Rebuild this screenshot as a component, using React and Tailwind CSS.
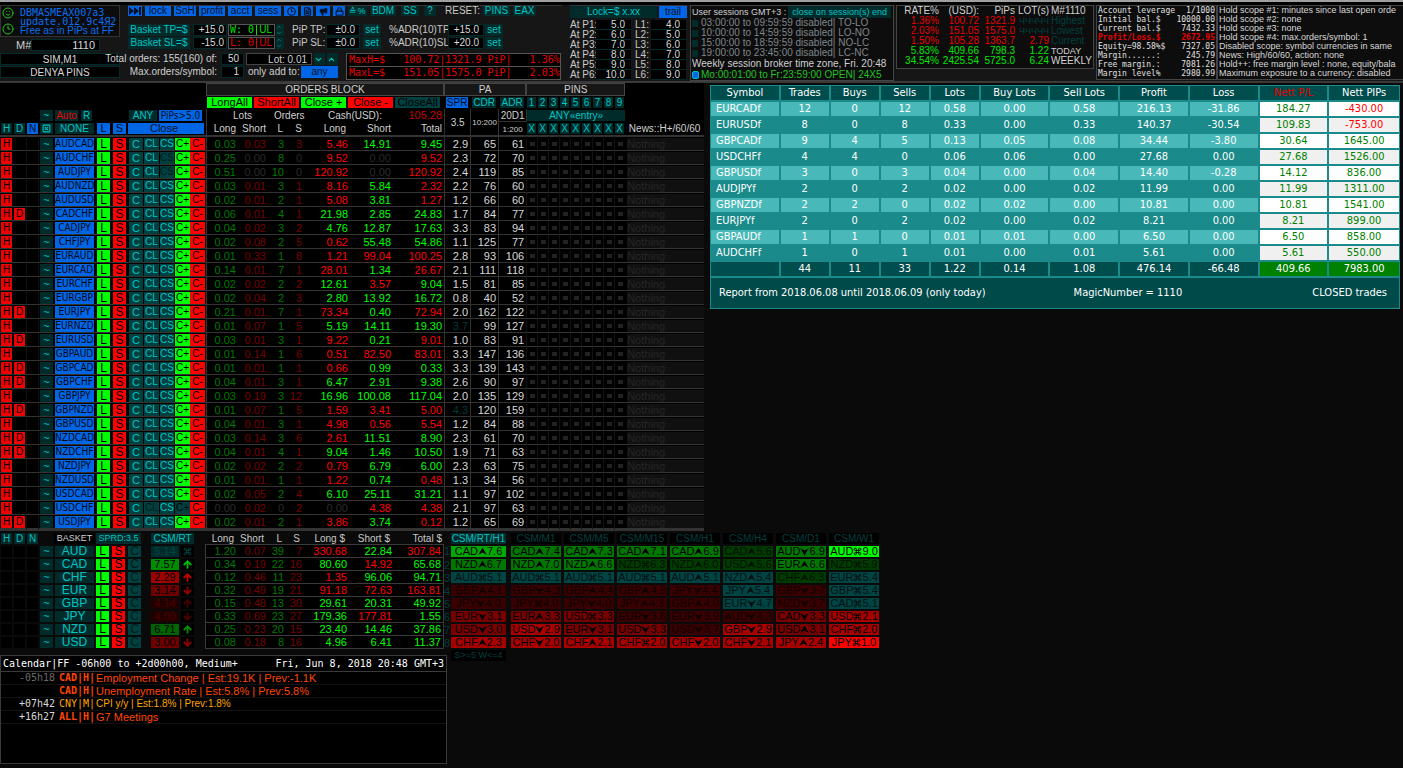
// App.jsx
import React from 'react';
import { Smile, Clock3, FileText, Megaphone, Lock, Command, ArrowUp, ArrowDown, ChevronDown, ChevronUp, SquareX } from 'lucide-react';

const mono = "font-['DejaVu_Sans_Mono','Liberation_Mono',monospace]";
const tahoma = "font-['DejaVu_Sans_Condensed','DejaVu_Sans',sans-serif]";
const tealBtn = "bg-[#002b2b] text-[#00c4c4] text-center whitespace-nowrap overflow-hidden";
const blueBtn = "bg-[#0066e6] text-[#001022] text-center whitespace-nowrap overflow-hidden";
const field = "bg-black text-[#d8d8d8] border border-[#002b2b] text-right";

// symbol, D flag, lots long/short, orders long/short, cash long/short/total, spread, cdr, adr
const PAIRS = [
    ['AUDCAD', 0, '0.03', '0.03', 3, 3, -5.46, 14.91, 9.45, '2.9', 65, 61],
    ['AUDCHF', 0, '0.25', '0.00', 8, 0, -9.52, 0, -9.52, '2.3', 72, 70],
    ['AUDJPY', 0, '0.51', '0.00', 10, 0, -120.92, 0, -120.92, '2.4', 119, 85],
    ['AUDNZD', 0, '0.03', '0.01', 3, 1, -8.16, 5.84, -2.32, '2.2', 76, 60],
    ['AUDUSD', 0, '0.02', '0.01', 2, 1, -5.08, 3.81, -1.27, '1.2', 66, 60],
    ['CADCHF', 1, '0.06', '0.01', 4, 1, 21.98, 2.85, 24.83, '1.7', 84, 77],
    ['CADJPY', 0, '0.04', '0.02', 3, 2, 4.76, 12.87, 17.63, '3.3', 83, 94],
    ['CHFJPY', 0, '0.02', '0.08', 2, 5, -0.62, 55.48, 54.86, '1.1', 125, 77],
    ['EURAUD', 0, '0.01', '0.33', 1, 8, -1.21, -99.04, -100.25, '2.8', 93, 106],
    ['EURCAD', 0, '0.14', '0.01', 7, 1, -28.01, 1.34, -26.67, '2.1', 111, 118],
    ['EURCHF', 0, '0.02', '0.02', 2, 2, 12.61, -3.57, 9.04, '1.5', 81, 85],
    ['EURGBP', 0, '0.02', '0.04', 2, 3, 2.8, 13.92, 16.72, '0.8', 40, 52],
    ['EURJPY', 1, '0.21', '0.01', 7, 1, -73.34, 0.4, -72.94, '2.0', 162, 122],
    ['EURNZD', 0, '0.01', '0.07', 1, 5, 5.19, 14.11, 19.3, '3.7', 99, 127],
    ['EURUSD', 1, '0.03', '0.01', 3, 1, -9.22, 0.21, -9.01, '1.0', 83, 91],
    ['GBPAUD', 0, '0.01', '0.14', 1, 6, -0.51, -82.5, -83.01, '3.3', 147, 136],
    ['GBPCAD', 1, '0.01', '0.01', 1, 1, -0.66, 0.99, 0.33, '3.3', 139, 143],
    ['GBPCHF', 1, '0.04', '0.01', 3, 1, 6.47, 2.91, 9.38, '2.6', 90, 97],
    ['GBPJPY', 0, '0.03', '0.19', 3, 12, 16.96, 100.08, 117.04, '2.0', 135, 129],
    ['GBPNZD', 1, '0.01', '0.07', 1, 5, -1.59, -3.41, -5, '4.3', 120, 159],
    ['GBPUSD', 0, '0.04', '0.01', 3, 1, -4.98, -0.56, -5.54, '1.2', 84, 88],
    ['NZDCAD', 1, '0.03', '0.14', 3, 6, -2.61, 11.51, 8.9, '2.3', 61, 70],
    ['NZDCHF', 1, '0.04', '0.01', 4, 1, 9.04, 1.46, 10.5, '1.9', 71, 63],
    ['NZDJPY', 0, '0.02', '0.02', 2, 2, -0.79, 6.79, 6, '2.3', 63, 75],
    ['NZDUSD', 0, '0.01', '0.01', 1, 1, -1.22, 0.74, -0.48, '1.3', 34, 56],
    ['USDCAD', 0, '0.02', '0.05', 2, 4, 6.1, 25.11, 31.21, '1.1', 97, 102],
    ['USDCHF', 0, '0.00', '0.02', 0, 2, 0, -4.38, -4.38, '2.1', 97, 63],
    ['USDJPY', 1, '0.02', '0.01', 2, 1, -3.86, 3.74, -0.12, '1.2', 65, 69],
];

const BASKETS = [
    ['AUD', '5.14', 'flat', 'bg-[#002b2b] text-[#004848]', 'text-[#004848]', '1.20', '0.07', 39, 7, -330.68, 22.84, -307.84],
    ['CAD', '7.57', 'up', 'bg-[#008c00] text-black', 'text-[#00c000]', '0.34', '0.19', 22, 16, 80.6, -14.92, 65.68],
    ['CHF', '2.29', 'up', 'bg-[#a00000] text-black', 'text-[#c00000]', '0.12', '0.46', 11, 23, -1.35, 96.06, 94.71],
    ['EUR', '3.14', 'down', 'bg-[#700000] text-black', 'text-[#900000]', '0.32', '0.49', 19, 21, -91.18, -72.63, -163.81],
    ['GBP', '4.14', 'up', 'bg-[#220000] text-[#4a0000]', 'text-[#480000]', '0.15', '0.48', 13, 30, 29.61, 20.31, 49.92],
    ['JPY', '4.00', 'down', 'bg-[#220000] text-[#4a0000]', 'text-[#480000]', '0.33', '0.69', 23, 27, 179.36, -177.81, 1.55],
    ['NZD', '6.71', 'up', 'bg-[#006400] text-black', 'text-[#009000]', '0.25', '0.23', 20, 15, 23.4, 14.46, 37.86],
    ['USD', '3.00', 'down', 'bg-[#700000] text-black', 'text-[#900000]', '0.08', '0.18', 8, 16, 4.96, 6.41, 11.37],
];

// u = rising, d = falling, f = flat
const METERS = [
    ['CSM/RT/H1', ['CADu7.6', 'NZDu6.7', 'AUDf5.1', 'GBPu4.1', 'JPYd4.0', 'EURd3.1', 'USDd3.0', 'CHFu2.3']],
    ['CSM/M1', ['CADu7.4', 'NZDu7.0', 'AUDf5.1', 'GBPd4.3', 'JPYf4.0', 'EURu3.3', 'USDd2.9', 'CHFd2.0']],
    ['CSM/M5', ['CADu7.3', 'NZDu6.6', 'AUDf5.1', 'GBPu4.4', 'JPYd4.0', 'USDf3.3', 'EURd3.1', 'CHFu2.1']],
    ['CSM/M15', ['CADu7.1', 'NZDf6.3', 'AUDf5.1', 'GBPu4.3', 'JPYu4.3', 'EURd3.6', 'USDd3.3', 'CHFf2.0']],
    ['CSM/H1', ['CADu6.9', 'NZDu6.0', 'AUDu5.1', 'JPYd4.4', 'GBPu4.0', 'EURd3.9', 'USDd3.7', 'CHFd2.0']],
    ['CSM/H4', ['CADu5.6', 'USDu5.6', 'NZDu5.4', 'JPYu5.4', 'EURd4.7', 'AUDd4.3', 'GBPd2.9', 'CHFd2.1']],
    ['CSM/D1', ['AUDd6.9', 'EURu6.6', 'CHFu6.3', 'GBPd3.7', 'NZDd3.7', 'CADd3.3', 'USDu3.1', 'JPYu2.4']],
    ['CSM/W1', ['AUDf9.0', 'NZDf5.9', 'EURf5.4', 'GBPf5.4', 'CADf5.1', 'USDf2.1', 'CHFf2.0', 'JPYf1.0']],
];

const REPORT = [
    ['EURCADf', '12', '0', '12', '0.58', '0.00', '0.58', '216.13', '-31.86', '184.27', '-430.00'],
    ['EURUSDf', '8', '0', '8', '0.33', '0.00', '0.33', '140.37', '-30.54', '109.83', '-753.00'],
    ['GBPCADf', '9', '4', '5', '0.13', '0.05', '0.08', '34.44', '-3.80', '30.64', '1645.00'],
    ['USDCHFf', '4', '4', '0', '0.06', '0.06', '0.00', '27.68', '0.00', '27.68', '1526.00'],
    ['GBPUSDf', '3', '0', '3', '0.04', '0.00', '0.04', '14.40', '-0.28', '14.12', '836.00'],
    ['AUDJPYf', '2', '0', '2', '0.02', '0.00', '0.02', '11.99', '0.00', '11.99', '1311.00'],
    ['GBPNZDf', '2', '2', '0', '0.02', '0.02', '0.00', '10.81', '0.00', '10.81', '1541.00'],
    ['EURJPYf', '2', '0', '2', '0.02', '0.00', '0.02', '8.21', '0.00', '8.21', '899.00'],
    ['GBPAUDf', '1', '1', '0', '0.01', '0.01', '0.00', '6.50', '0.00', '6.50', '858.00'],
    ['AUDCHFf', '1', '0', '1', '0.01', '0.00', '0.01', '5.61', '0.00', '5.61', '550.00'],
];

const cashColor = v => (v === 0 ? 'text-[#2a2a2a]' : v > 0 ? 'text-[#00ff00]' : 'text-[#ff0000]');
const longColor = v => (Number(v) === 0 ? 'text-[#2a2a2a]' : 'text-[#007800]');
const shortColor = v => (Number(v) === 0 ? 'text-[#2a2a2a]' : 'text-[#780000]');
const cash = v => Math.abs(v).toFixed(2);

const meterColor = v => {
    if (v >= 8.5) return 'bg-[#00ff00] text-black';
    if (v >= 7.5) return 'bg-[#00a800] text-black';
    if (v >= 6.5) return 'bg-[#007800] text-black';
    if (v >= 5.5) return 'bg-[#003c00] text-[#001000]';
    if (v >= 4.5) return 'bg-[#004444] text-[#001010]';
    if (v >= 3.5) return 'bg-[#380000] text-[#100000]';
    if (v >= 2.95) return 'bg-[#780000] text-black';
    if (v >= 1.5) return 'bg-[#a80000] text-black';
    return 'bg-[#ff0000] text-black';
};

const Trend = ({ dir }) => {
    if (dir === 'f') return <Command size={9} strokeWidth={2.5} />;
    return (
        <svg width="9" height="9" viewBox="0 0 9 9" fill="currentColor">
            {dir === 'u' ? <path d="M4.5 0.5 8.8 8 4.5 5.6 0.2 8Z" /> : <path d="M4.5 8.5 8.8 1 4.5 3.4 0.2 1Z" />}
        </svg>
    );
};

const IdentPanel = () => (
    <div className="w-[120px] shrink-0">
        <div className="flex h-8 gap-1.5 border border-[#333] bg-[#0c0c0c] pl-px">
            <div className="flex flex-col justify-between py-px text-[#22c322]">
                <Smile size={12} />
                <Clock3 size={12} />
            </div>
            <div className="text-[10px] leading-[9px] text-[#0a6cf0] pt-0.5 whitespace-nowrap">
                <div className={mono}>DBMASMEAX007a3</div>
                <div className={mono}>update.012.9c4Я2</div>
                <div>Free as in PiPs at FF</div>
            </div>
        </div>
        <label className="flex h-3 mt-0.5 pl-4 pr-5 text-[#d0d0d0] items-center">
            M#
            <input defaultValue="1110" className={`${field} h-3 w-full min-w-0 px-1`} />
        </label>
        <div className="mt-0.5 h-3 bg-black border border-[#002b2b] text-center text-[10px] leading-[11px] text-[#d8d8d8]">SIM,M1</div>
        <div className="mt-px h-3 bg-black border border-[#002b2b] text-center text-[10px] leading-[11px] text-[#d8d8d8]">DENYA PINS</div>
    </div>
);

const BasketLine = ({ kind, basket, lots, boxClass, adr }) => (
    <div className="flex h-3 items-stretch leading-3 text-[#c8c8c8] whitespace-nowrap">
        <button className={`${tealBtn} w-[62px] mr-[3px]`}>Basket {kind}=$</button>
        <input aria-label={`Basket ${kind}`} defaultValue={basket} className={`${field} w-[34px] mr-px pr-0.5`} />
        <div className={`flex w-[47px] justify-between border border-[#555] bg-black px-px leading-[10px] ${boxClass}`}>
            <span className={`${mono} whitespace-pre`}>{lots}</span>
            <span className="border-l border-current pl-0.5 pr-px">UL</span>
        </div>
        <span className="flex flex-col w-2 ml-px mr-2 bg-[#002b2b] text-[#00c4c4]">
            <ChevronUp size={6} /><ChevronDown size={6} />
        </span>
        <span className="w-[34px]">PiP {kind}:</span>
        <input aria-label={`PiP ${kind}`} defaultValue="±0.0" className={`${field} w-[34px] mr-[3px] pr-1`} />
        <button className={`${tealBtn} w-[18px] mr-2`}>set</button>
        <span className="w-[59px] text-right pr-px">%ADR(10){kind}:</span>
        <input aria-label={`ADR ${kind}`} defaultValue={adr} className={`${field} w-9 mr-px pr-1`} />
        <button className={`${tealBtn} w-[18px]`}>set</button>
    </div>
);

const ControlPanel = () => (
    <div className="w-[442px] shrink-0 pl-2 text-[10px]">
        <div className="flex h-[11px] gap-[3px] leading-[10px] border-t border-[#333] whitespace-nowrap">
            <button aria-label="Skip" className={`${blueBtn} w-3.5 flex items-center justify-center`}>
                <svg width="12" height="8" viewBox="0 0 12 8" fill="currentColor"><path d="M0 0 5 4 0 8ZM5 0 10 4 5 8ZM10 0H12V8H10Z" /></svg>
            </button>
            <button className={`${blueBtn} w-[26px]`}>lock</button>
            <button className={`${blueBtn} w-[22px]`}>SoH</button>
            <button className={`${blueBtn} w-[26px]`}>profit</button>
            <button className={`${blueBtn} w-[24px]`}>acct</button>
            <button className={`${blueBtn} w-[26px]`}>sess</button>
            <button aria-label="Clock" className={`${blueBtn} w-3.5 flex items-center justify-center`}><Clock3 size={9} strokeWidth={3} /></button>
            <button aria-label="Log" className={`${blueBtn} w-3 flex items-center justify-center`}><FileText size={9} strokeWidth={3} /></button>
            <button aria-label="Announce" className={`${blueBtn} w-3.5 flex items-center justify-center`}><Megaphone size={9} fill="currentColor" /></button>
            <button aria-label="Lock" className={`${blueBtn} w-3 flex items-center justify-center`}><Lock size={9} strokeWidth={3} /></button>
            <button className={`${tealBtn} w-[19px] text-[9px]`}>≙%</button>
            <button className={`${tealBtn} w-[26px]`}>BDM</button>
            <button className={`${tealBtn} w-[18px] ml-0.5`}>SS</button>
            <button className={`${tealBtn} w-3 ml-0.5`}>?</button>
            <span className="ml-[5px] text-[#c8c8c8] text-right w-9">RESET:</span>
            <button className={`${tealBtn} w-[27px]`}>PINS</button>
            <button className={`${tealBtn} w-[23px]`}>EAX</button>
        </div>
        <div className="mt-2 flex flex-col gap-px">
            <BasketLine kind="TP" basket="+15.0" lots="W: 0" boxClass="text-[#00e000]" adr="+15.0" />
            <BasketLine kind="SL" basket="-15.0" lots="L: 0" boxClass="text-[#e00000]" adr="+20.0" />
        </div>
        <div className="mt-1 flex leading-3 text-[#d0d0d0] whitespace-nowrap">
            <div className="flex w-[89px] flex-col items-end gap-px">
                <label htmlFor="total-orders">Total orders: 155(160) of:</label>
                <label htmlFor="max-orders">Max.orders/symbol:</label>
            </div>
            <div className="ml-1 mr-0.5 flex w-[23px] flex-col gap-px">
                <input id="total-orders" defaultValue="50" className={`${field} h-3 w-full pr-1`} />
                <input id="max-orders" defaultValue="1" className={`${field} h-3 w-full pr-1`} />
            </div>
            <div className="mr-2 flex w-[92px] flex-col gap-px">
                <div className="flex h-3 gap-0.5">
                    <span className="flex-1 border border-[#444] bg-black pr-1 text-right leading-[11px]">Lot: 0.01</span>
                    <button aria-label="Lot down" className={`${tealBtn} w-[11px]`}><ChevronDown size={9} strokeWidth={3} /></button>
                    <button aria-label="Lot up" className={`${tealBtn} w-[11px]`}><ChevronUp size={9} strokeWidth={3} /></button>
                </div>
                <div className="flex h-3 justify-between pl-0.5">
                    <span>only add to:</span>
                    <button className={`${blueBtn} w-[37px]`}>any</button>
                </div>
            </div>
            <div className={`${mono} w-[215px] border border-[#555] bg-black pl-0.5 text-[10px] leading-3 text-[#e60000] whitespace-pre`}>
                <div className="border-b border-[#555]">MaxH=$   100.72|1321.9 PiP|   1.36%</div>
                <div>MaxL=$   151.05|1575.0 PiP|   2.03%</div>
            </div>
        </div>
    </div>
);

const LOCKS = [['5.0', '4.0'], ['6.0', '5.0'], ['7.0', '6.0'], ['8.0', '7.0'], ['9.0', '8.0'], ['10.0', '9.0']];

const LockPanel = () => (
    <div className="w-[117px] shrink-0 mr-[3px] text-[10px] text-[#c8c8c8]">
        <div className="flex h-[13px] gap-0.5 border-t border-[#333] leading-3">
            <button className={`${tealBtn} flex-1`}>Lock=$ x.xx</button>
            <button className={`${blueBtn} w-7`}>trail</button>
        </div>
        <div className="mt-0.5">
            {LOCKS.map(([p, l], i) => (
                <div key={i} className="flex h-2.5 items-center leading-[10px] whitespace-nowrap">
                    <label htmlFor={`p${i}`} className="w-[26px]">At P{i + 1}:</label>
                    <input id={`p${i}`} defaultValue={p} className={`${field} h-2.5 w-[35px] border-x-0 border-t-0 pr-1.5`} />
                    <label htmlFor={`l${i}`} className="ml-1 w-4">L{i + 1}:</label>
                    <input id={`l${i}`} defaultValue={l} className={`${field} h-2.5 w-[35px] border-x-0 border-t-0 pr-1.5`} />
                </div>
            ))}
        </div>
    </div>
);

const SESSIONS = [
    '03:00:00 to 09:59:59 disabled| TO-LO',
    '10:00:00 to 14:59:59 disabled| LO-NO',
    '15:00:00 to 18:59:59 disabled| NO-LC',
    '19:00:00 to 23:45:00 disabled| LC-NC',
];

const SessionPanel = () => (
    <div className="w-[204px] h-[76px] shrink-0 mr-0.5 border border-[#444] bg-[#0d0d0d] pl-px text-[10px] text-[#d0d0d0] whitespace-nowrap">
        <div className="flex h-3 leading-3 text-[9px] justify-between pr-0.5">
            User sessions GMT+3 :
            <button className={`${tealBtn} ml-0.5 flex-1 leading-[11px]`}>close on session(s) end</button>
        </div>
        {SESSIONS.map(s => (
            <label key={s} className="flex h-2.5 items-center gap-[3px] leading-[10px] text-[#7f868c]">
                <input type="checkbox" className="appearance-none w-1.5 h-[7px] bg-[#002b2b]" />
                {s}
            </label>
        ))}
        <div className="h-[11px] leading-[11px]">Weekly session broker time zone, Fri. 20:48</div>
        <label className="flex h-[11px] items-center gap-0.5 leading-[11px] text-[#22c322]">
            <input type="checkbox" defaultChecked className="appearance-none w-[7px] h-2 rounded-xs border border-[#00c4c4] bg-[#0066e6]" />
            Mo:00:01:00 to Fr:23:59:00 OPEN| 24X5
        </label>
    </div>
);

const RATES = [
    ['1.36%', '100.72', '1321.9', 'ЧЧЧЧЧ', 'Highest', 'text-[#e60000]', 'text-[#004040]'],
    ['2.03%', '151.05', '1575.0', 'ЧЧЧЧЧ', 'Lowest', 'text-[#e60000]', 'text-[#004040]'],
    ['1.50%', '105.28', '1363.7', '2.79', 'Current', 'text-[#e60000]', 'text-[#004040]'],
    ['5.83%', '409.66', '798.3', '1.22', 'TODAY', 'text-[#00e600]', 'text-[#d0d0d0]'],
    ['34.54%', '2425.54', '5725.0', '6.24', 'WEEKLY', 'text-[#00e600]', 'text-[#d0d0d0]'],
];

const RatePanel = () => (
    <div className="w-[198px] h-16 shrink-0 mr-0.5 border border-[#444] bg-[#0d0d0d]">
        <table className="w-full table-fixed border-separate border-spacing-0 text-right text-[10px] leading-[10px] whitespace-nowrap">
            <colgroup><col className="w-[42px]" /><col className="w-10" /><col className="w-9" /><col className="w-[34px]" /><col /></colgroup>
            <thead className="text-[#d0d0d0]">
                <tr>{['RATE%', '(USD):', 'PiPs', 'LOT(s)'].map(h => <th key={h} className="p-0 font-normal">{h}</th>)}<th className="p-0 pl-0.5 text-left font-normal">M#1110</th></tr>
            </thead>
            <tbody>
                {RATES.map(([r, u, p, l, name, color, nameColor]) => (
                    <tr key={name} className={color}>
                        <td className="p-0">{r}</td><td className="p-0">{u}</td><td className="p-0">{p}</td>
                        <td className={`p-0 ${l.startsWith('Ч') ? 'text-[9px] text-[#004040]' : ''}`}>{l}</td>
                        <td className={`p-0 pl-0.5 text-left ${nameColor} ${name === 'TODAY' ? 'text-[9px]' : ''}`}>{name}</td>
                    </tr>
                ))}
            </tbody>
        </table>
    </div>
);

const ACCOUNT = [
    ['Account leverage', '1/1000'], ['Initial bal.$', '10000.00'], ['Current bal.$', '7432.33'], ['Profit/Loss.$', '2672.95'],
    ['Equity=98.58%$', '7327.05'], ['Margin......:', '245.79'], ['Free margin.:', '7081.26'], ['Margin level%', '2980.99'],
];

const SCOPES = [
    'Hold scope #1: minutes since last open orde', 'Hold scope #2: none', 'Hold scope #3: none', 'Hold scope #4: max.orders/symbol: 1',
    'Disabled scope: symbol currencies in same', 'News: High/60/60, action: none',
    'Hold++: free margin level : none, equity/bala', 'Maximum exposure to a currency: disabled',
];

const Header = () => (
    <header className="flex h-[78px] border-b-2 border-[#3a3a3a] bg-[#161616] overflow-hidden">
        <IdentPanel />
        <ControlPanel />
        <div className="w-2 shrink-0" />
        <LockPanel />
        <SessionPanel />
        <RatePanel />
        <dl className={`${mono} w-[121px] h-[75px] shrink-0 border border-[#444] bg-[#0d0d0d] px-px text-[8px] leading-[9px] text-[#e0e0e0] whitespace-nowrap`}>
            {ACCOUNT.map(([k, v]) => (
                <div key={k} className={`flex justify-between ${k.startsWith('Profit') ? 'font-bold text-[#e60000]' : ''}`}>
                    <dt>{k}</dt><dd>{v}</dd>
                </div>
            ))}
        </dl>
        <div className="h-[75px] min-w-0 flex-1 overflow-hidden border border-r-0 border-[#444] bg-[#0d0d0d] pl-px text-[9px] leading-[9px] text-[#d8d8d8] whitespace-nowrap">
            {SCOPES.map(s => <p key={s}>{s}</p>)}
        </div>
    </header>
);

const th = "p-0 font-normal text-center text-[10px] text-[#d0d0d0]";
const vline = "border-l border-[#333]";
const headBtn = "block h-[11px] w-full leading-[11px]";
const blockBtn = "h-[11px] flex-1 text-[11px] leading-[11px]";
const PINS = [1, 2, 3, 4, 5, 6, 7, 8, 9];

const PairsHead = () => (
    <thead>
        <tr className="h-[13px]">
            <th colSpan={12} className={th}></th>
            <th colSpan={7} className={`${th} border border-[#444] bg-[#161616]`}>ORDERS BLOCK</th>
            <th colSpan={3} className={`${th} border border-[#444] bg-[#161616]`}>PA</th>
            <th colSpan={9} className={`${th} border border-[#444] bg-[#161616]`}>PINS</th>
            <th className={th}></th>
        </tr>
        <tr className="h-[13px]">
            <th colSpan={12} className={th}></th>
            <th colSpan={7} className={`${th} pr-1`}>
                <div className="flex gap-0.5 whitespace-nowrap pl-px text-black">
                    <button className={`${blockBtn} bg-[#00ff00]`}>LongAll</button>
                    <button className={`${blockBtn} bg-[#ff0000]`}>ShortAll</button>
                    <button className={`${blockBtn} bg-[#00ff00]`}>Close +</button>
                    <button className={`${blockBtn} bg-[#ff0000]`}>Close -</button>
                    <button className={`${blockBtn} bg-[#004040]`}>CloseAll</button>
                </div>
            </th>
            <th className={`${th} px-0.5`}><button className={`${blueBtn} ${headBtn}`}>SPR</button></th>
            <th className={`${th} px-0.5`}><button className={`${tealBtn} ${headBtn}`}>CDR</button></th>
            <th className={`${th} px-0.5`}><button className={`${tealBtn} ${headBtn}`}>ADR</button></th>
            {PINS.map(n => (
                <th key={n} className={`${th} px-px`}><button className={`${tealBtn} ${headBtn}`}>{n}</button></th>
            ))}
            <th className={th}></th>
        </tr>
        <tr className="h-[13px]">
            <th colSpan={3} className={th}></th>
            <th className={`${th} px-px`}><button className={`${tealBtn} ${headBtn}`}>~</button></th>
            <th className={`${th} pl-px`}>
                <div className="flex gap-[3px] pr-1">
                    <button className="h-[11px] flex-1 leading-[11px] bg-[#002b2b] text-[#e60000]">Auto</button>
                    <button className={`${tealBtn} h-[11px] w-[11px] leading-[11px]`}>R</button>
                </div>
            </th>
            <th colSpan={2} className={th}></th>
            <th colSpan={5} className={`${th} pl-px`}>
                <div className="flex gap-0.5 pr-1">
                    <button className={`${tealBtn} h-[11px] w-7 leading-[11px]`}>ANY</button>
                    <button className={`${blueBtn} ${tahoma} h-[11px] flex-1 leading-[11px]`}>PiPs&gt;5.0</button>
                </div>
            </th>
            <th colSpan={2} className={`${th} ${vline} pl-3`}>Lots</th>
            <th colSpan={2} className={`${th} pl-2`}>Orders</th>
            <th colSpan={2} className={`${th} pl-4`}>Cash(USD):</th>
            <th className={`${th} text-right pr-0.5`}><span className="text-[11px] text-[#c80000]">105.28</span></th>
            <th rowSpan={2} className={`${th} ${vline}`}>3.5</th>
            <th rowSpan={2} className={`${th} ${vline}`}><span className="text-[8px]">10:200</span></th>
            <th className={`${th} ${vline} border-b`}>20D1</th>
            <th colSpan={9} className={`${th} ${vline} pb-px`}><button className={`${tealBtn} ${headBtn}`}>ANY«entry»</button></th>
            <th className={th}></th>
        </tr>
        <tr className="h-[13px]">
            {['H', 'D'].map(h => <th key={h} className={`${th} px-px`}><button className={`${tealBtn} ${headBtn}`}>{h}</button></th>)}
            <th className={`${th} px-px`}><button className={`${blueBtn} ${headBtn}`}>N</button></th>
            <th className={`${th} px-px`}><button aria-label="Clear" className={`${tealBtn} flex h-[11px] w-full items-center justify-center`}><SquareX size={9} strokeWidth={3} /></button></th>
            <th className={`${th} pl-px pr-0.5`}><button className={`${tealBtn} ${headBtn}`}>NONE</button></th>
            {['L', 'S'].map(h => <th key={h} className={`${th} pl-px pr-0.5`}><button className={`${blueBtn} ${headBtn} text-[11px]`}>{h}</button></th>)}
            <th colSpan={5} className={`${th} pr-0.5`}><button className={`${blueBtn} ${headBtn} pr-1 text-[11px]`}>Close</button></th>
            <th className={`${th} ${vline} text-right`}>Long</th>
            <th className={`${th} text-right`}>Short</th>
            <th className={`${th} text-right pr-0.5`}>L</th>
            <th className={`${th} text-right pr-px`}>S</th>
            <th className={`${th} text-right pr-0.5`}>Long</th>
            <th className={`${th} text-right`}>Short</th>
            <th className={`${th} text-right pr-0.5`}>Total</th>
            <th className={`${th} ${vline}`}><span className="text-[8px]">1:200</span></th>
            {PINS.map(n => (
                <th key={n} className={`${th} px-px`}><button className={`${tealBtn} ${headBtn}`}>X</button></th>
            ))}
            <th className={`${th} whitespace-nowrap`}>News::H+/60/60</th>
        </tr>
    </thead>
);

const cell = "p-0 pt-px border-b border-[#333]";
const box = "block h-3 w-full leading-3 text-center overflow-hidden whitespace-nowrap";

const PairRow = ({ row }) => {
    const [symbol, d, lotsL, lotsS, ordL, ordS, cashL, cashS, total, spread, cdr, adr] = row;
    const plus = symbol !== 'USDCHF';
    return (
        <tr>
            <td className={`${cell} px-px`}><button className={`${box} bg-[#f00000] text-black text-[10px]`}>H</button></td>
            <td className={`${cell} px-px`}>{d ? <button className={`${box} bg-[#f00000] text-black text-[10px]`}>D</button> : null}</td>
            <td className={`${cell} border-x border-x-[#111]`}></td>
            <td className={`${cell} px-px`}><button className={`${box} ${tealBtn}`}>~</button></td>
            <td className={`${cell} pl-px pr-0.5`}><button className={`${box} ${tahoma} bg-[#0066e6] text-[#000814] text-[10px]`}>{symbol}</button></td>
            <td className={`${cell} pl-px pr-0.5`}><button className={`${box} bg-[#00ff00] text-black text-xs leading-3`}>L</button></td>
            <td className={`${cell} pl-px pr-0.5`}><button className={`${box} bg-[#ff0000] text-black text-xs leading-3`}>S</button></td>
            <td className={`${cell} px-px`}><button className={`${box} bg-[#004040] text-[#00c4c4]`}>C</button></td>
            <td className={`${cell} pr-px`}><button className={`${box} bg-[#004040] text-[10px] ${ordL ? 'text-[#00c4c4]' : 'text-[#001a1a]'}`}>CL</button></td>
            <td className={`${cell} pr-px`}><button className={`${box} bg-[#004040] text-[10px] ${ordS ? 'text-[#00c4c4]' : 'text-[#001a1a]'}`}>CS</button></td>
            <td className={cell}><button className={`${box} ${plus ? 'bg-[#00ff00]' : 'bg-[#004040]'} text-[10px] text-black`}>C+</button></td>
            <td className={`${cell} pr-px`}><button className={`${box} bg-[#ff0000] text-[10px] text-black`}>C-</button></td>
            <td className={`${cell} ${vline} ${longColor(lotsL)}`}>{lotsL}</td>
            <td className={`${cell} ${shortColor(lotsS)}`}>{lotsS}</td>
            <td className={`${cell} pr-px ${longColor(ordL)}`}>{ordL}</td>
            <td className={`${cell} pr-px ${shortColor(ordS)}`}>{ordS}</td>
            <td className={`${cell} ${cashColor(cashL)}`}>{cash(cashL)}</td>
            <td className={`${cell} ${cashColor(cashS)}`}>{cash(cashS)}</td>
            <td className={`${cell} pr-0.5 ${cashColor(total)}`}>{cash(total)}</td>
            <td className={`${cell} ${vline} pr-0.5 ${Number(spread) > 3.5 ? 'text-[#003c3c]' : 'text-[#d8d8d8]'}`}>{spread}</td>
            <td className={`${cell} ${vline} pr-0.5 text-[#d8d8d8]`}>{cdr}</td>
            <td className={`${cell} ${vline} pr-0.5 text-[#d8d8d8]`}>{adr}</td>
            {PINS.map(n => (
                <td key={n} className={`${cell} border-l border-l-[#121212]`}><span className="mx-auto block h-1 w-[5px] bg-[#222]" /></td>
            ))}
            <td className={`${cell} pl-0.5`}><span className="block h-3 bg-[#101010] text-left leading-3 text-[#262626]">Nothing</span></td>
        </tr>
    );
};

const PairsTable = () => (
    <table className="w-[704px] shrink-0 table-fixed border-separate border-spacing-0 bg-black text-right text-[11px] leading-[11px]">
        <colgroup>
            <col className="w-[13px]" /><col className="w-[13px]" /><col className="w-[13px]" /><col className="w-[15px]" /><col className="w-[42px]" />
            <col className="w-4" /><col className="w-4" /><col className="w-4" /><col className="w-4" /><col className="w-[15px]" /><col className="w-[15px]" /><col className="w-4" />
            <col className="w-[30px]" /><col className="w-[30px]" /><col className="w-[19px]" /><col className="w-[18px]" />
            <col className="w-[45px]" /><col className="w-[43px]" /><col className="w-[53px]" />
            <col className="w-[26px]" /><col className="w-7" /><col className="w-7" />
            {PINS.map(n => <col key={n} className="w-[11px]" />)}
            <col />
        </colgroup>
        <PairsHead />
        <tbody className="[&>tr:first-child>td]:border-t-2 [&>tr:first-child>td]:border-t-[#333] [&>tr:last-child>td]:border-b-3">
            {PAIRS.map(row => <PairRow key={row[0]} row={row} />)}
        </tbody>
    </table>
);

const REPORT_HEAD = ['Symbol', 'Trades', 'Buys', 'Sells', 'Lots', 'Buy Lots', 'Sell Lots', 'Profit', 'Loss', 'Nett P/L', 'Nett PIPs'];
const REPORT_TOTAL = ['', '44', '11', '33', '1.22', '0.14', '1.08', '476.14', '-66.48', '409.66', '7983.00'];

const Report = () => (
    <section className={`${tahoma} mt-0.5 ml-1.5 mr-[3px] min-w-0 flex-1 self-start border border-[#1a8a8a] bg-[#1a8a8a] text-[11px] leading-[14px] text-white`}>
        <table className="w-full table-fixed border-separate border-spacing-0 text-center">
            <colgroup>
                {REPORT_HEAD.map((h, i) => <col key={h} className={i > 0 && i < 5 ? 'w-[50px]' : ''} />)}
            </colgroup>
            <thead>
                <tr>
                    {REPORT_HEAD.map(h => (
                        <th key={h} className={`h-4 border-r-2 border-b-2 border-[#1a8a8a] bg-[#004d4d] p-0 font-normal last:border-r-0 ${h === 'Nett P/L' ? 'text-[#e60000]' : ''}`}>{h}</th>
                    ))}
                </tr>
            </thead>
            <tbody>
                {REPORT.map((row, r) => (
                    <tr key={row[0]} className={r % 2 ? 'bg-[#1a8a8a]' : 'bg-[#48b8b8]'}>
                        {row.map((v, i) => (
                            <td
                                key={i}
                                className={`h-4 border-r-2 border-b-2 border-[#1a8a8a] p-0 last:border-r-0 ${i === 0 ? 'pl-[5px] text-left' : ''} ${i > 8 ? (r % 2 ? 'bg-[#f0f0f0]' : 'bg-white') : ''} ${i > 8 ? (v.startsWith('-') ? 'text-[#ff0000]' : 'text-[#008000]') : ''}`}
                            >
                                {v}
                            </td>
                        ))}
                    </tr>
                ))}
                <tr>
                    {REPORT_TOTAL.map((v, i) => (
                        <td key={i} className={`h-4 border-r-2 border-b-2 border-[#1a8a8a] p-0 last:border-r-0 ${i > 8 ? 'bg-[#008000]' : 'bg-[#004d4d]'}`}>{v}</td>
                    ))}
                </tr>
            </tbody>
        </table>
        <footer className="flex h-[30px] items-center bg-[#004a4a] pl-2 pr-3">
            <span>Report from 2018.06.08 until 2018.06.09 (only today)</span>
            <span className="ml-[88px] mr-auto">MagicNumber = 1110</span>
            <span>CLOSED trades</span>
        </footer>
    </section>
);

const bcell = "p-0 pt-0.5";
const bbox = "block h-[11px] w-full leading-[11px] text-center overflow-hidden whitespace-nowrap";

const BasketControls = () => (
    <table className="w-[194px] table-fixed border-separate border-spacing-0 leading-[11px]">
        <colgroup>
            <col className="w-[13px]" /><col className="w-[13px]" /><col className="w-[13px]" /><col className="w-[15px]" /><col className="w-[41px]" />
            <col className="w-4" /><col className="w-4" /><col className="w-6" /><col className="w-[29px]" /><col />
        </colgroup>
        <thead>
            <tr>
                {['H', 'D', 'N'].map(h => <th key={h} className={`${bcell} px-px font-normal`}><button className={`${tealBtn} ${bbox} text-[10px]`}>{h}</button></th>)}
                <th className={bcell}></th>
                <th className={`${bcell} font-normal`}><span className={`${bbox} bg-black text-[9px] text-[#d0d0d0]`}>BASKET</span></th>
                <th colSpan={3} className={`${bcell} pl-px pr-2.5 font-normal`}><button className={`${tealBtn} ${bbox} text-[9px]`}>SPRD:3.5</button></th>
                <th colSpan={2} className={`${bcell} font-normal`}><button className={`${tealBtn} ${bbox} text-[10px]`}>CSM/RT</button></th>
            </tr>
        </thead>
        <tbody>
            {BASKETS.map(([name, score, dir, scoreColor, arrowColor]) => (
                <tr key={name} className="h-[13px]">
                    {[1, 2, 3].map(n => <td key={n} className={`${bcell} px-px`}><span className={`${bbox} bg-black`}></span></td>)}
                    <td className={`${bcell} px-px`}><button className={`${tealBtn} ${bbox}`}>~</button></td>
                    <td className={`${bcell} px-px`}><button className={`${tealBtn} ${bbox} text-xs leading-[11px]`}>{name}</button></td>
                    <td className={`${bcell} pl-px pr-0.5`}><button className={`${bbox} bg-[#00ff00] text-black text-xs leading-[11px]`}>L</button></td>
                    <td className={`${bcell} pl-px pr-0.5`}><button className={`${bbox} bg-[#ff0000] text-black text-xs leading-[11px]`}>S</button></td>
                    <td className={`${bcell} pl-px pr-2.5`}><button className={`${bbox} bg-[#004040] text-[#001a1a] text-xs leading-[11px]`}>C</button></td>
                    <td className={`${bcell} pr-px`}><span className={`${bbox} text-[11px] ${scoreColor}`}>{score}</span></td>
                    <td className={`${bcell} pl-px`}>
                        <span className={`flex h-[11px] items-center justify-center bg-black ${arrowColor}`}>
                            {dir === 'flat' ? <Command size={9} strokeWidth={2.5} /> : dir === 'up' ? <ArrowUp size={11} strokeWidth={4} /> : <ArrowDown size={11} strokeWidth={4} />}
                        </span>
                    </td>
                </tr>
            ))}
        </tbody>
    </table>
);

const BasketOrders = () => (
    <table className="ml-[11px] w-[245px] table-fixed border-separate border-spacing-0 text-right leading-[11px]">
        <colgroup>
            <col className="w-[31px]" /><col className="w-[30px]" /><col className="w-[18px]" /><col className="w-[18px]" />
            <col className="w-[45px]" /><col className="w-[45px]" /><col className="w-[52px]" /><col />
        </colgroup>
        <thead className="text-[10px] text-[#c8c8c8]">
            <tr>
                {['Long', 'Short', 'L', 'S', 'Long $', 'Short $', 'Total $'].map(h => <th key={h} className="h-[13px] p-0 pt-0.5 pr-0.5 font-normal">{h}</th>)}
                <th className="p-0"></th>
            </tr>
        </thead>
        <tbody className="[&>tr:first-child>td:not(:last-child)]:border-t">
            {BASKETS.map(([name, , , , , lotsL, lotsS, ordL, ordS, cashL, cashS, total], i) => (
                <tr key={name} className="h-[13px] [&>td:not(:last-child)]:border-b [&>td]:border-[#3a3a3a] [&>td:not(:last-child)]:bg-black">
                    <td className={`p-0 pt-px border-l ${longColor(lotsL)}`}>{lotsL}</td>
                    <td className={`p-0 pt-px ${shortColor(lotsS)}`}>{lotsS}</td>
                    <td className={`p-0 pt-px ${longColor(ordL)}`}>{ordL}</td>
                    <td className={`p-0 pt-px ${shortColor(ordS)}`}>{ordS}</td>
                    <td className={`p-0 pt-px ${cashColor(cashL)}`}>{cash(cashL)}</td>
                    <td className={`p-0 pt-px ${cashColor(cashS)}`}>{cash(cashS)}</td>
                    <td className={`p-0 pt-px pr-0.5 border-r ${cashColor(total)}`}>{cash(total)}</td>
                    <td className="p-0 pt-px text-[#003c3c]">{i + 1}</td>
                </tr>
            ))}
        </tbody>
    </table>
);

const Meters = () => (
    <div className="flex gap-[3px] pl-px pt-0.5 text-center text-[11px] leading-[11px] whitespace-nowrap">
        {METERS.map(([title, rows], m) => (
            <div key={title} className={`flex flex-col gap-0.5 ${m === 0 ? 'w-[55px] mr-0.5' : 'w-[50px]'}`}>
                <button className={`h-[11px] text-[10px] ${m === 0 ? 'bg-[#002b2b] text-[#00c4c4]' : 'bg-black text-[#004040]'}`}>{title}</button>
                {rows.map(r => (
                    <div key={r} className={`flex h-[11px] items-center justify-center overflow-hidden ${meterColor(Number(r.slice(4)))}`}>
                        {r.slice(0, 3)}
                        <Trend dir={r[3]} />
                        {r.slice(4)}
                    </div>
                ))}
                {m === 0 && <div className="h-[11px] bg-black text-[9px] text-[#004040]">S&gt;=5 W&lt;=4</div>}
            </div>
        ))}
    </div>
);

const EVENTS = [
    ['-05h18', 'CAD|H|', 'Employment Change | Est:19.1K | Prev:-1.1K', 'text-[#6a6a6a]', 'text-[#ff4500]', true],
    ['', 'CAD|H|', 'Unemployment Rate | Est:5.8% | Prev:5.8%', 'text-[#d8d8d8]', 'text-[#ff4500]', true],
    ['+07h42', 'CNY|M|', 'CPI y/y | Est:1.8% | Prev:1.8%', 'text-[#d8d8d8]', 'text-[#ffa500]', false],
    ['+16h27', 'ALL|H|', 'G7 Meetings', 'text-[#d8d8d8]', 'text-[#ff4500]', true],
];

const Calendar = () => (
    <section className="mt-1.5 h-[109px] w-[447px] border border-[#3a3a3a] bg-black whitespace-nowrap">
        <div className={`${mono} flex h-4 items-center justify-between border-b border-[#3a3a3a] px-0.5 text-[10px] text-white`}>
            <h2>Calendar|FF -06h00 to +2d00h00, Medium+</h2>
            <time>Fri, Jun 8, 2018 20:48 GMT+3</time>
        </div>
        <ul>
            {EVENTS.map(([when, code, text, whenColor, color, bold]) => (
                <li key={text} className="flex h-[13px] items-center border-b border-[#121212] leading-3">
                    <span className={`${mono} w-[54px] text-right text-[10px] ${whenColor}`}>{when}</span>
                    <span className={`${mono} ml-1 w-[37px] text-[10px] ${color} ${bold ? 'font-bold' : ''}`}>{code}</span>
                    <span className={`${color} ${bold ? 'text-[11px]' : 'text-[10px]'}`}>{text}</span>
                </li>
            ))}
        </ul>
    </section>
);

const App = () => (
    <div className="min-h-screen overflow-hidden bg-[#0a0a0a] font-['Liberation_Sans',Arial,sans-serif] text-[11px]">
        <div className="h-[5px] border-t-2 border-[#a0a0a0] bg-black" />
        <Header />
        <main>
            <div className="flex">
                <PairsTable />
                <Report />
            </div>
            <div className="flex items-start">
                <div className="w-[450px] shrink-0">
                    <div className="flex items-start">
                        <BasketControls />
                        <BasketOrders />
                    </div>
                    <Calendar />
                </div>
                <Meters />
            </div>
        </main>
    </div>
);

export default App;
